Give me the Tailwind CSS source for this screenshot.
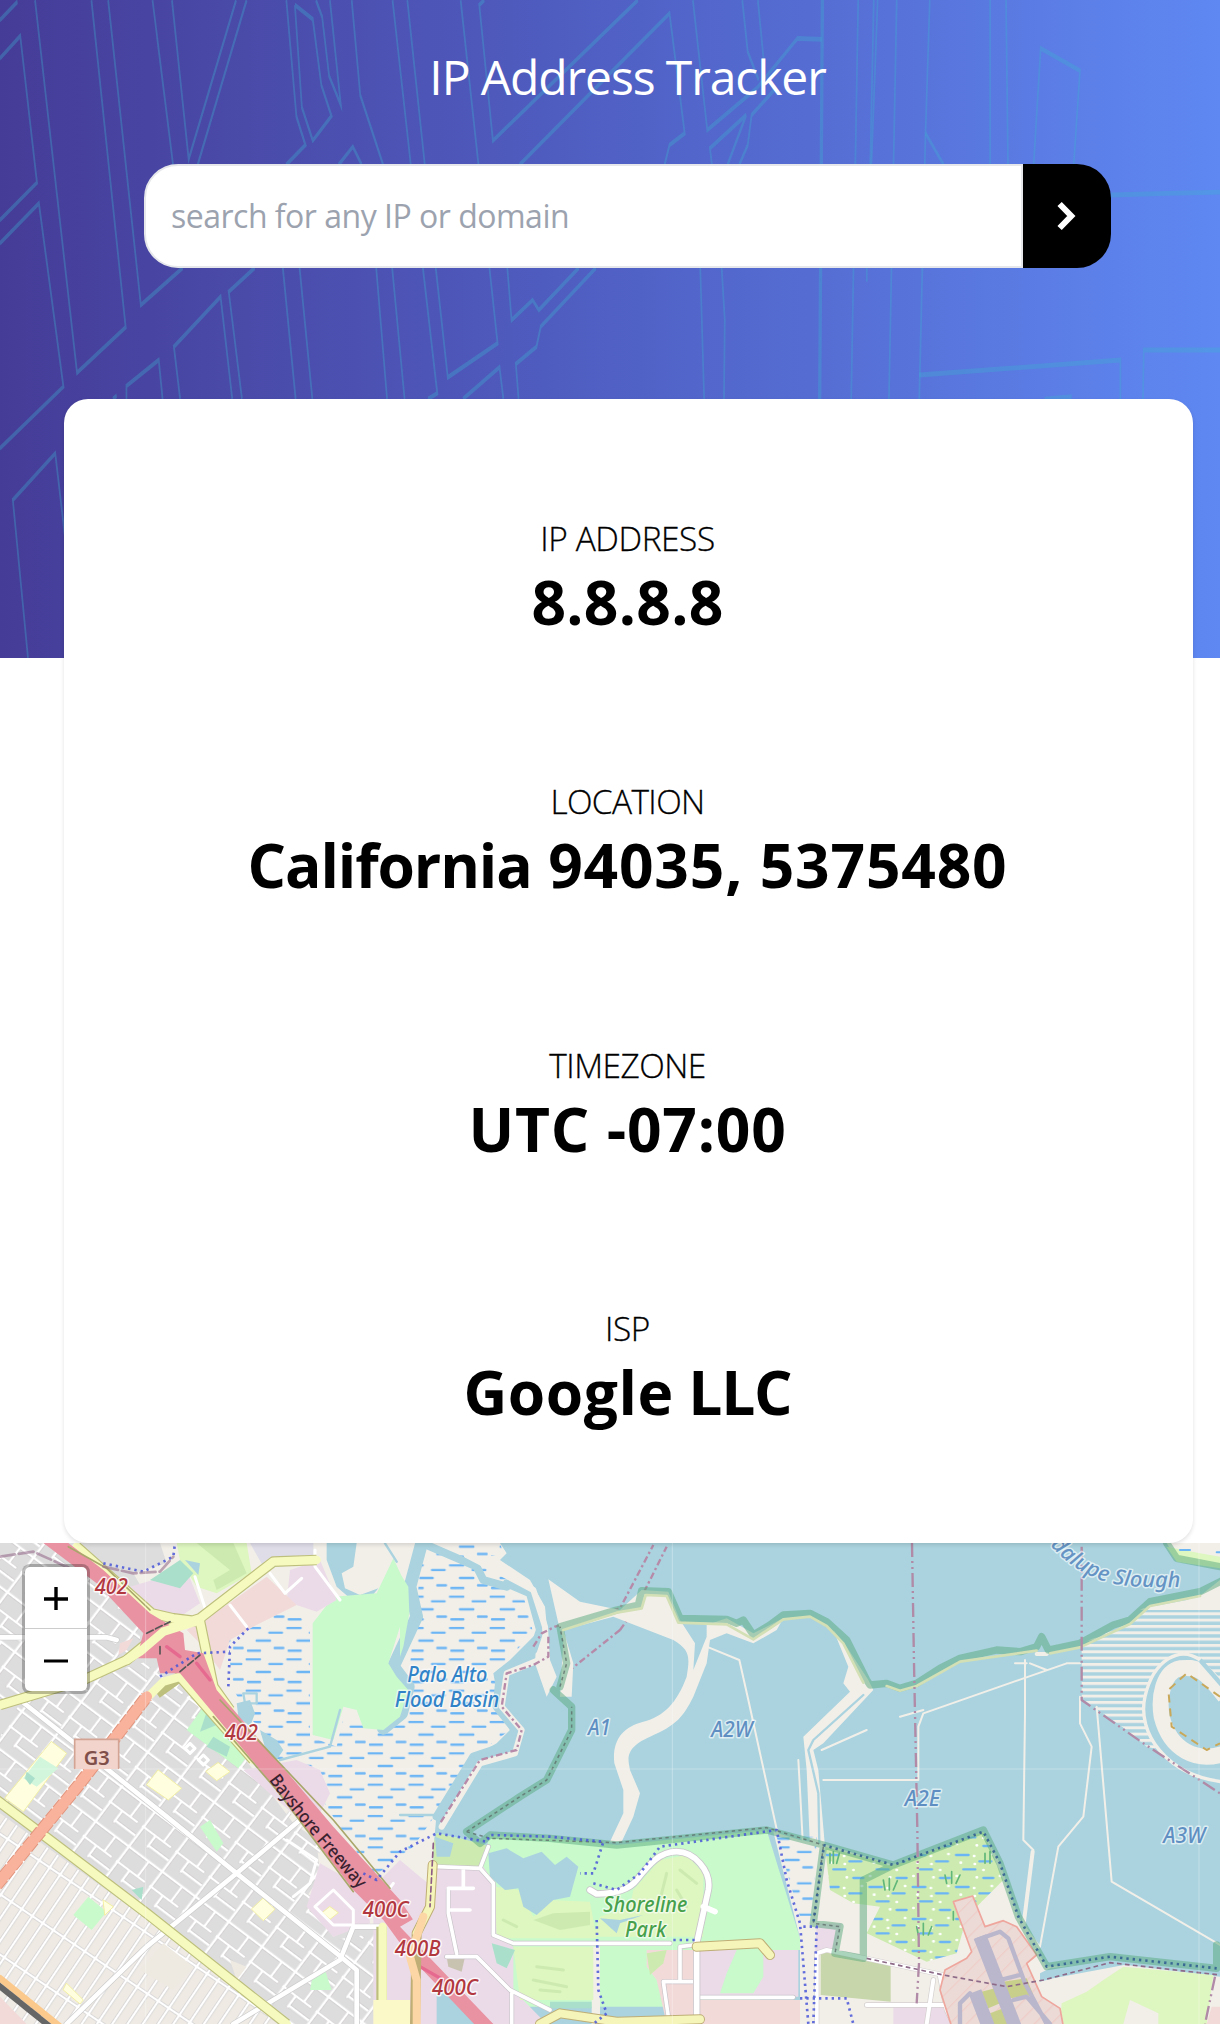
<!DOCTYPE html>
<html lang="en">
<head>
<meta charset="utf-8">
<title>IP Address Tracker</title>
<script src="https://cdn.jsdelivr.net/npm/@tailwindcss/browser@4"></script>
</head>
<body class="bg-white font-['Open_Sans','Noto_Sans',sans-serif] text-black">
<main class="relative flex h-[2024px] w-[1220px] flex-col overflow-hidden">
  <header class="relative flex h-[658px] shrink-0 flex-col items-center bg-linear-to-r from-[#453c97] from-0% via-[#5060c4] via-50% to-[#5f88f2] to-100%">
    <svg class="absolute inset-0 h-full w-full" viewBox="0 0 3136 1974" preserveAspectRatio="none" aria-hidden="true">
      <g id="streets" transform="scale(4 13)" fill="none" stroke="#3fb0d0" stroke-opacity=".34" stroke-width="1.1"></g>
    </svg>
    <h1 class="relative mt-[45px] ml-[35px] text-5xl leading-[64px] font-normal tracking-[-1.1px] whitespace-nowrap text-white">IP Address Tracker</h1>
    <form class="relative mt-[55px] ml-[35px] flex h-[104px] w-[967px]">
      <div class="flex h-full w-[879px] items-center rounded-l-[34px] border-2 border-[#e5e7eb] bg-white pl-[25px] text-[32px] leading-none tracking-[-0.5px] text-[#9ca3af]">search for any IP or domain</div>
      <button type="button" class="flex h-full w-[88px] items-center justify-center rounded-r-[34px] bg-black" aria-label="Search">
        <svg class="h-[32px] w-[24px]" viewBox="0 0 24 32" fill="none" stroke="#fff" stroke-width="6"><path d="M4.6 4 16.3 16 4.6 28"/></svg>
      </button>
    </form>
  </header>

  <section class="relative z-10 -mt-[259px] ml-[64px] flex h-[1144px] w-[1129px] shrink-0 flex-col items-center gap-[135.4px] rounded-[24px] bg-white pt-[115px] pr-[2px] shadow-[0_2px_4px_rgba(0,0,0,0.12)]">
    <div class="flex flex-col items-center whitespace-nowrap"><p class="text-[33.4px] leading-[48px] font-light tracking-[-0.4px] [-webkit-text-stroke:0.3px_#000]">IP ADDRESS</p><p class="text-[60.5px] leading-[80px] font-bold tracking-[0.3px]">8.8.8.8</p></div>
    <div class="flex flex-col items-center whitespace-nowrap"><p class="text-[33.4px] leading-[48px] font-light tracking-[-0.6px] [-webkit-text-stroke:0.3px_#000]">LOCATION</p><p class="text-[60.5px] leading-[80px] font-bold tracking-[0.8px]"><span class="tracking-[-1.1px]">California</span> 94035, 5375480</p></div>
    <div class="flex flex-col items-center whitespace-nowrap"><p class="text-[33.4px] leading-[48px] font-light tracking-[-0.5px] [-webkit-text-stroke:0.3px_#000]">TIMEZONE</p><p class="text-[60.5px] leading-[80px] font-bold tracking-[0.8px]">UTC -07:00</p></div>
    <div class="flex flex-col items-center whitespace-nowrap"><p class="text-[33.4px] leading-[48px] font-light tracking-[-0.4px] [-webkit-text-stroke:0.3px_#000]">ISP</p><p class="text-[60.5px] leading-[80px] font-bold tracking-[-1.2px]"><span class="tracking-[0.5px]">Google</span> LLC</p></div>
  </section>

  <section class="relative h-[481px] w-full shrink-0 overflow-hidden bg-[#aad3df]">
    <svg class="block h-full w-full" viewBox="0 39 3660 1443" fill="none" stroke-linejoin="round" stroke-linecap="round">
      <defs>
        <pattern id="marsh" width="122" height="94" patternUnits="userSpaceOnUse"><path d="M8 12h40M76 26h38M38 50h40M92 72h26M12 80h36" stroke="#6cb5f5" stroke-width="7"/></pattern>
        <pattern id="reeds" width="130" height="96" patternUnits="userSpaceOnUse"><rect width="130" height="96" fill="#cdebb0"/><path d="M8 15h38M78 34h36M30 58h36M90 84h30" stroke="#6cb5f5" stroke-width="7"/><path d="M62 18h1M22 38h1M64 42h1M90 60h1M10 78h1M70 82h1M115 12h1" stroke="#fff" stroke-width="8"/></pattern>
        <pattern id="blocks1" width="125" height="130" patternUnits="userSpaceOnUse" patternTransform="rotate(37)"><path d="M0 5h125M0 62h80M5 0v130M50 62v40M80 5v57h25M50 98h75" stroke="#d0cdcd" stroke-width="12"/><path d="M0 5h125M0 62h80M5 0v130M50 62v40M80 5v57h25M50 98h75" stroke="#fff" stroke-width="7.5"/></pattern>
        <pattern id="blocks2" width="38" height="150" patternUnits="userSpaceOnUse" patternTransform="rotate(34)"><rect width="38" height="150" fill="#efebe4"/><path d="M0 6h38M6 0v150" stroke="#d0cdcd" stroke-width="12"/><path d="M0 6h38M6 0v150" stroke="#fff" stroke-width="7.5"/></pattern>
        <pattern id="ponds" width="40" height="19" patternUnits="userSpaceOnUse"><path d="M-5 4h50" stroke="#f2efe9" stroke-width="9"/></pattern>
        <pattern id="apron" width="36" height="36" patternUnits="userSpaceOnUse" patternTransform="rotate(45)"><rect width="36" height="36" fill="#ebdad6"/><path d="M2-2v40" stroke="#f0cac5" stroke-width="3"/></pattern>
      </defs>

      <!-- land and flood basin -->
      <path fill="#f2efe9" d="M0 39H1500L1520 70 1500 90 1590 150 1635 230 1650 390 1670 440 1640 500 1605 400 1610 310 1530 390 1480 430 1500 540 1530 600 1490 640 1420 680 1310 850 1300 960V1482H0Z"/>
      <path fill="url(#marsh)" d="M860 240 930 280V620L1010 650 1040 520 1070 580 1180 600 1225 450 1270 39H1500L1510 70 1420 90 1560 160 1600 310 1480 430 1500 540 1530 600 1420 680 1310 850 1240 950 1120 1040 960 800 840 700 700 480 680 310Z"/>
      <path stroke="#aad3df" stroke-width="38" d="M1265 39 1230 170 1250 260 1180 410 1225 470 1205 550 1150 595"/>
      <path stroke="#aad3df" stroke-width="24" d="M1280 45 1430 110 1450 150 1520 170M1520 160 1590 190 1620 300 1600 360 1500 430 1490 530 1545 600 1510 650 1420 680 1310 860"/>
      <path stroke="#f2efe9" stroke-width="18" d="M1400 75 1515 135 1600 180 1635 290 1640 380 1520 430 1505 530 1565 600 1545 670 1440 700 1325 890"/>
      <path stroke="#b68aa8" stroke-width="7" stroke-dasharray="20 9 7 9" d="M1600 350 1625 310 1665 290 1860 235 1960 45M1860 300 1710 420M1860 300 1910 230 2000 50M1645 320 1645 380 1600 405 1520 430 1505 530 1565 600 1550 660 1440 690 1320 880" stroke-linecap="butt"/>
      <path fill="#aad3df" d="M980 39H1070L1060 110 1025 130 1035 175 1080 195 1135 175 1110 205 1050 205 1010 170 980 90Z"/>
      <path fill="#c8facc" d="M1180 85 1215 160 1200 290 1165 400 1190 440 1225 480 1200 560 1150 600 1090 595 1070 540 1030 530 1000 630 938 615V280L1000 200 1130 190ZM1200 130 1225 170 1228 250 1210 350 1200 380Z"/>
      <path stroke="#aad3df" stroke-width="7" d="M840 690 990 650 1020 540M1200 855H1300M1155 40 1190 95M730 490H770V520H735Z"/>
      <path fill="#aad3df" d="M710 520 750 510 765 550 750 590 715 560ZM780 600 830 630 850 660 830 690 800 670Z"/>

      <!-- town districts -->
      <path fill="#dedddd" d="M0 39H480L500 100 400 130 470 250 480 400 560 430 640 560 760 720 880 880 950 930 960 1040 920 1100 1000 1220 1060 1190H1130V1482H0Z"/>
      <path fill="url(#blocks1)" d="M0 39H250L420 260V380L250 430 0 520ZM60 520 420 400 480 390 540 450 640 560 760 720 960 950 950 1100 1000 1230 1130 1210V1482H850L440 1130 130 910 0 800V620Z"/>
      <path fill="url(#blocks2)" d="M0 850 430 1160 860 1482H0Z"/>
      <path fill="#eeeae2" d="M490 1240 580 1310 520 1380 420 1320ZM690 1290 740 1310 710 1350Z"/>
      <path fill="#ebdbe8" d="M390 170 560 120 600 220 540 260 450 240ZM730 720 890 690 960 720 990 790 960 850 900 870ZM960 1000 1100 1080 1110 1180 1000 1220 920 1130ZM1120 1070 1200 990 1260 1040 1310 1080V1482H1120ZM870 120 960 90 1010 210 950 245 860 215Z"/>
      <path fill="#f2dad9" d="M560 300 680 225 800 140 890 225 760 290 690 330 660 420 600 340Z"/>
      <path fill="#dfdde8" d="M750 39H940V100L820 85 790 110Z"/>
      <path fill="#def6c0" d="M530 39H740L755 130 650 190 590 170 540 90Z"/>
      <path fill="#cdebb0" d="M590 39H700L740 130 650 180 640 150 690 120Z"/>
      <path fill="#aae0cb" d="M450 150 540 90 580 130 540 175Z"/>
      <path fill="#aad3df" d="M555 90 600 100 595 135Z"/>
      <path fill="#c8facc" d="M610 530 740 680 715 715 560 600ZM600 890 630 870 670 940 650 965ZM265 1100 320 1145 275 1200 220 1155ZM940 1330 975 1320 995 1380 930 1380Z"/>
      <path fill="#aae0cb" d="M620 545 650 585 600 605ZM640 620 690 650 680 680 620 650ZM395 1080 430 1070 425 1110Z"/>
      <path fill="#ffffe0" stroke="#f3f0a4" stroke-width="3" d="M155 635 200 670 70 845 15 805ZM475 720 545 775 505 810 440 765ZM655 698 690 725 650 752 618 725ZM790 1105 825 1138 790 1172 755 1138ZM310 1110 340 1130 315 1155ZM990 1130 1015 1148 990 1168 968 1148ZM200 1360 250 1410 240 1422 190 1380Z"/>
      <path fill="#d2f6dc" d="M120 680 175 715 110 770 70 745Z"/><path fill="#aae0cb" d="M80 725 105 745 90 765 75 745Z"/>

      <!-- roads -->
      <g stroke="#ccc" stroke-width="18"><path d="M60 510 300 700 500 860 710 1030 1010 1270 1070 1320V1482M900 870 710 1030 440 1250 200 1482M700 1482 1020 1290 1060 1190H1150M0 322H320L350 330"/></g>
      <g stroke="#fff" stroke-width="14"><path d="M60 510 300 700 500 860 710 1030 1010 1270 1070 1320V1482M900 870 710 1030 440 1250 200 1482M700 1482 1020 1290 1060 1190H1150M0 322H320L350 330"/></g>
      <path stroke="#fff" stroke-width="9" d="M810 130 855 190 905 145M585 140 620 250M690 225 740 290M945 60V110L1020 210M1000 1080 945 1130 1000 1185H1060V1140ZM570 640 555 655 570 670 585 655ZM610 675 595 690 610 705 625 690ZM860 930 950 990 930 1060 880 1100M1180 1060 1150 1100"/>
      <path stroke="#bdc07c" stroke-width="32" d="M-10 810 130 915 440 1150 860 1482M0 525 250 450 380 390 490 300 600 265 820 95 950 90M230 50 455 250 520 265 600 275 640 470 690 540M470 490 540 440 760 690M1145 1190V1482" stroke-linecap="butt"/>
      <path stroke="#f7fabf" stroke-width="25" d="M-10 810 130 915 440 1150 860 1482M0 525 250 450 380 390 490 300 600 265 820 95 950 90M230 50 455 250 520 265 600 275 640 470 690 540M450 495 490 455 540 440 760 690M1148 1190V1482"/>
      <path stroke="#e1957e" stroke-width="38" d="M-10 1065 240 760 440 500" stroke-dasharray="30 6" stroke-linecap="butt"/>
      <path stroke="#f9b29c" stroke-width="32" d="M-10 1065 240 760 440 500"/>
      <path fill="#e892a2" d="M130 39H205L310 120 450 250 550 310 555 360 610 370 650 480 830 690 1000 890 1200 1110 1260 1200 1530 1490H1430L1230 1280 1150 1170 1060 1080 830 780 640 550 540 430 480 430 470 385 410 385 430 310 290 160Z"/>
      <path stroke="#f7fabf" stroke-width="26" d="M380 390 420 365 490 305 600 270"/>
      <path stroke="#a9a76b" stroke-width="5" d="M205 50 320 115 450 240M660 510 1000 870 1170 1075M640 560 830 780 1060 1085"/>
      <path stroke="#e66a90" stroke-width="10" d="M500 350 540 380M590 400 630 450M1260 1310 1330 1350"/>
      <path stroke="#555" stroke-width="5" d="M440 310 510 275M480 350V380M540 425 600 375" stroke-dasharray="22 8"/>
      <path stroke="#fcc98c" stroke-width="20" d="M0 1345 180 1490"/><path stroke="#666" stroke-width="18" d="M-5 1365 150 1490" stroke-dasharray="35 5"/>
      <path fill="#f2dad9" d="M0 1400 80 1482H0ZM360 340 400 325 380 360 355 375Z"/>

      <!-- area behind the park -->
      <path fill="#c8facc" d="M1310 910 1380 925 1460 950 1470 915 1650 925 1850 945 2300 900 2400 1225V1260H2280V1430H1470V1040H1300Z"/>
      <path fill="#cdebb0" d="M1310 910 1440 940 1470 950 1440 1010H1300V940Z"/>
      <path fill="#ebdbe8" d="M1300 1010H1450L1490 1070V1220L1540 1250V1380L1640 1482H1480L1200 1190 1270 1150ZM2100 1260H2395V1400H2100Z"/>
      <path fill="#f2efe9" d="M1775 1250H1800V1482H1775Z"/>
      <path fill="#def6c0" d="M1485 1070 1560 1080 1600 1160 1650 1110 1770 1115 1790 1225H1490ZM1540 1250H1780V1410H1560ZM1900 1080 1980 990 2060 975 2110 1030 2110 1220H1780L1800 1160 1890 1130Z"/>
      <path fill="#cdebb0" d="M1600 1170 1660 1150 1770 1145V1185L1680 1200Z"/>
      <path fill="#f2dad9" d="M1940 1260H2090V1482H2000L1970 1350 1940 1310ZM2100 1410H2400V1482H2100Z"/>
      <path fill="#cdebb0" d="M1940 1270 2000 1260 1990 1300 1950 1335Z"/>
      <path fill="#c8facc" d="M2210 1260H2290V1340L2260 1390H2160L2180 1330Z"/>
      <path fill="#aad3df" d="M1465 970 1520 955 1570 985 1625 965 1665 1005 1700 980 1735 1010 1710 1100 1660 1110 1610 1155 1570 1130 1555 1075 1515 1080 1470 1040ZM1800 1165 1860 1170 1930 1155 1860 1180 1850 1210ZM1305 920 1360 940 1350 980 1310 980Z"/>
      <path fill="#aae0cb" d="M1475 1240 1545 1260 1520 1315 1490 1300ZM1650 1415H1775V1435H1650Z"/><path fill="#c8c3b0" d="M1340 1280H1395L1385 1325 1345 1310Z"/><path fill="#fbf9c8" d="M1120 1410H1230V1482H1120Z"/>
      <path stroke="#cdebb0" stroke-width="9" d="M1510 1170 1550 1190M1610 1310 1690 1320M1600 1350 1700 1370M1620 1380 1680 1385M2000 1030 1980 1110M2040 1020 2090 1060M2030 1080 2060 1130"/>
      <g stroke="#c9c4c9" stroke-width="15"><path d="M1310 1010 1440 1015 1480 1060V1215L1540 1240H2010M1465 950 1440 1015M1340 1280H1430L1530 1380 1650 1440M1345 1080V1150L1370 1270M1535 1390V1482M2090 1355H1990L2005 1460M2040 1350V1250L2080 1245M2100 1402H2380"/></g>
      <g stroke="#fff" stroke-width="11"><path d="M1310 1010 1440 1015 1480 1060V1215L1540 1240H2010M1465 950 1440 1015M1390 1015V1075H1345V1150L1370 1270M1345 1075H1420M1345 1140H1410M1340 1280H1430L1530 1380 1650 1440M1535 1390V1482M2090 1355H1990L2005 1460M2040 1350V1250L2080 1245M2100 1402H2380"/></g>
      <path stroke="#c9c4c9" stroke-width="22" d="M1770 1080 1790 1092Q1880 1090 1910 1050C1950 1000 1980 965 2030 965S2135 1020 2125 1080L2090 1240V1482"/>
      <path stroke="#fff" stroke-width="17" d="M1770 1080 1790 1092Q1880 1090 1910 1050C1950 1000 1980 965 2030 965S2135 1020 2125 1080L2090 1240V1482M2110 1130 2145 1145"/>
      <path stroke="#bfae75" stroke-width="30" d="M1298 1005 1290 1130 1250 1210 1245 1482M2090 1250 2280 1240 2310 1275M1620 1482 1680 1450 1850 1475 2100 1468"/><path stroke="#f5f5ba" stroke-width="24" d="M1298 1005 1290 1130 1250 1210M2090 1250 2280 1240 2310 1275M1620 1482 1680 1450 1850 1475 2100 1468"/><path stroke="#fcd6a4" stroke-width="24" d="M1270 1160 1230 1280 1250 1350V1482"/>
      <path stroke="#8d5c86" stroke-width="5" d="M1300 940 1290 1130" stroke-dasharray="16 10"/>

      <!-- salt ponds -->
      <g fill="#f2efe9">
        <path d="M1645 148 1740 215 1860 240 1925 180 2005 185 2040 270 2085 340 2080 420 2120 320V285L2180 265 2260 310 2350 265 2330 300 2260 340 2180 310 2130 330 2120 400 2080 500C2050 560 2030 585 1950 620S1885 690 1890 720L1920 790 1900 860 1865 935H1830L1870 850 1870 780 1843 700C1835 630 1870 590 1930 575S2030 520 2060 440C2070 380 2070 360 2020 330L1840 260 1690 300 1720 400 1715 500 1680 500 1690 330 1675 280Z"/>
        <path d="M2500 300 2540 350 2605 450 2620 480 2470 640 2440 660 2455 720 2475 950H2430L2420 720 2410 620 2550 485 2530 460 2545 410Z"/>
      </g>
      <path stroke="#aad3df" stroke-width="7" d="M2590 495 2440 630 2425 660 2455 790 2458 940"/>
      <g stroke="#f2efe9" stroke-width="6"><path d="M2120 350 2218 390 2245 510 2335 920M2395 690 2400 780 2408 930M2465 660 2600 600M2470 750H2755V590L2770 550 3200 400M3075 390 3075 550 3070 930 3100 960M3240 500V580L3275 650 3250 860 3175 950 3120 1250M3290 530 3335 1055 3660 1245M3090 400 3140 420M3045 400H3080M2700 560 2770 540M3200 400H3240"/></g>
      <path stroke="#f2efe9" stroke-width="12" d="M3098 965 3070 1190 3115 1250M3110 372H3140"/>

      <!-- evaporation ponds at the slough -->
      <path fill="#f2efe9" d="M3500 39H3660V110L3530 90ZM3430 235 3560 210 3610 190 3660 150V240H3420Z"/>
      <path fill="#def6c0" d="M3500 50 3600 70 3660 80V115L3530 95Z"/><path stroke="#6cb5f5" stroke-width="6" d="M3540 60h30M3650 67h10"/>
      <path fill="url(#ponds)" d="M3245 340 3390 280 3450 220H3660V700L3440 650 3380 600 3245 505Z"/>
      <path fill="#aad3df" stroke="#f2efe9" stroke-width="10" d="M3665 480 3600 390C3540 345 3460 390 3435 500S3500 735 3665 755"/>
      <path stroke="#f2efe9" stroke-width="48" stroke-linecap="butt" d="M3675 500C3610 415 3590 410 3540 415 3490 425 3475 500 3485 560 3510 660 3590 700 3675 670"/>
      <path stroke="#aad3df" stroke-width="13" stroke-linecap="butt" d="M3600 390 3670 470"/>
      <path stroke="#c9a85a" stroke-width="6" stroke-dasharray="24 18" stroke-linecap="butt" d="M3660 500 3560 430 3505 480 3515 590 3620 660 3660 640"/>

      <!-- marsh, airfield and bayfront -->
      <path fill="#f2efe9" d="M2320 905 2400 930 2480 945 2680 1005 2950 905 3000 1000 3055 1160 3140 1310 3340 1300 3660 1340V1482H2400V1225Z"/>
      <path fill="url(#marsh)" d="M2330 920H2450L2440 1160H2400Z"/>
      <path fill="url(#reeds)" d="M2475 950 2680 1005 2950 905 3010 1050 2930 1130 2900 1160 2870 1270 2780 1295 2600 1210 2640 1130 2560 1120 2490 1080Z"/>
      <path stroke="#61b77a" stroke-width="5" d="M2490 1000V970M2500 1000V965M2510 1000 2518 970M2655 1080 2650 1050M2668 1080V1045M2680 1080 2692 1052M2840 1060 2835 1035M2855 1060V1025M2868 1060 2880 1035M2755 1215 2750 1190M2770 1215V1180M2785 1215 2795 1190M2955 1000V970M2970 1000V965M2860 1170V1145"/>
      <path fill="#ebdbe8" d="M2450 1180H2525L2505 1270H2445ZM2680 1430H2840L2860 1482H2680Z"/><path fill="#c8d7ab" d="M2462 1265 2672 1300V1415L2462 1395Z"/>
      <path fill="#def6c0" d="M3185 1420 3260 1385 3310 1350 3370 1310 3640 1335 3620 1482H3180Z"/><path fill="#f2efe9" d="M3390 1410 3475 1450V1482H3370Z"/><path fill="#f2dad9" d="M3635 1430H3660V1482H3620Z"/>
      <path stroke="#d5d0d0" stroke-width="16" d="M2450 1482V1270L2480 1260 2830 1335M2820 1340 2840 1440 2860 1482M2600 1425H2830M2800 1350 2780 1482"/>
      <path stroke="#fff" stroke-width="12" d="M2450 1482V1270L2480 1260 2830 1335M2820 1340 2840 1440 2860 1482M2600 1425H2830M2800 1350 2780 1482"/>
      <path fill="url(#apron)" stroke="#eea69d" stroke-width="5" d="M2860 1115 2918 1098 2955 1190 3010 1172 3050 1190 3110 1275 3080 1300 3125 1400 3180 1435 3190 1490H2855L2820 1380 2835 1320 2900 1285 2915 1265Z"/>
      <path fill="#c8cf8b" d="M3010 1355 3080 1345 3100 1395 3030 1405ZM2945 1385 2985 1375 3000 1420 2965 1435ZM2970 1450 3010 1435 3030 1482H2980Z"/>
      <path stroke="#bab6cb" stroke-width="40" stroke-linecap="butt" d="M2940 1220 3045 1490M2925 1385 2965 1490"/>
      <path stroke="#bab6cb" stroke-width="13" d="M2930 1230 3000 1205 3025 1225 3075 1360 3140 1482M2880 1482 2880 1420 2910 1390M3000 1350 3060 1335M3040 1410 3080 1400 3150 1482"/>
      <path fill="#aad3df" d="M3120 1330 3150 1315 3340 1290 3400 1300 3160 1345 3120 1355Z"/>

      <!-- reserve boundary -->
      <path stroke="#58aa7c" stroke-opacity=".5" stroke-width="22" d="M1400 905 1560 800 1640 750 1715 600V530L1660 480M1680 470 1700 400 1680 290 1850 240 1915 225 1925 182 2005 185 2040 265 2180 268 2210 280 2230 270 2260 315 2310 285 2350 255 2430 250 2480 275 2540 330 2600 450 2610 465 2660 460 2700 475 2750 460 2820 415 2880 385 2990 360 3060 365 3110 350 3125 320 3145 360 3240 340 3340 285 3390 270 3450 215 3600 185 3660 155M3500 39 3530 85 3660 110M1400 905 1440 940 1470 915 1650 925 1850 945 2300 900 2470 945 2680 1005 2950 900 3000 1000 3055 1160 3140 1310 3330 1280 3650 1315V1245M2470 950 2440 1180 2520 1190 2505 1270 2590 1285V1050L2670 1010"/>
      <path stroke="#d3dfb4" stroke-width="8" d="M1690 300 1850 248 1925 235 1937 195 2000 198 2035 278 2180 283 2260 328 2350 268 2430 260 2480 288 2530 340 2590 458M2660 468 2700 482 2750 468 2880 395 3110 362M3150 370 3240 352 3390 282 3450 228 3600 198"/>
      <path stroke="#5d6a68" stroke-width="4.5" stroke-opacity=".75" stroke-dasharray="10 10" stroke-linecap="butt" d="M1400 905 1560 800 1640 750 1715 600V530M1680 470 1700 400 1680 290M1400 905 1470 925 1850 938 2300 893 2470 945M2470 950 2440 1180 2520 1190 2505 1270"/>
      <path stroke="#8d6a88" stroke-width="5" stroke-dasharray="14 10" stroke-linecap="butt" d="M2600 1285 2830 1335 3020 1370 3130 1350 3330 1298 3660 1335"/>
      <g stroke="#4956d8" stroke-opacity=".85" stroke-width="8" stroke-dasharray="7 12" stroke-linecap="butt"><path d="M310 100 430 125 520 80 525 39M745 295 690 350 685 470M480 440 590 370 690 365M1090 1030 1130 1050 1200 965 1310 910 1460 935 1470 915 1650 920 1810 935 1780 1030 1740 1030M1780 1060 1850 1080 1920 1030 1980 950 2330 900 2360 1050 2400 1180 2425 1482M1790 1170 1795 1380 1820 1450 1780 1482M2020 1230 2090 1230"/><path stroke="#2f5a90" d="M2470 945 2680 1005 2950 905 3000 1000 3055 1160 3140 1310 3330 1280 3650 1315M2470 960 2440 1180"/><path d="M2410 1190H2450L2440 1482M2400 1405H2540L2560 1482"/></g>
      <path stroke="#b08aa6" stroke-width="7" stroke-dasharray="42 12 6 12 6 12" stroke-linecap="butt" d="M2736 39 2742 400 2752 900 2757 1300 2750 1420M3245 50V510L3430 640 3660 790M3645 1340 3615 1482"/>
      <path stroke="#96708e" stroke-width="8" stroke-dasharray="45 12" d="M0 80 100 65 210 115M310 110 400 130 480 125 520 80" stroke-opacity=".6"/>
      <path stroke="#fff" stroke-opacity=".3" stroke-width="3" d="M0 717H3660M437 39V1482M2017 39V1482M3597 39V1482"/>

      <!-- labels -->
      <path fill="#f2d4cd" d="M224 627H356V717H224Z"/><path stroke="#d3a494" stroke-width="5" d="M224 715V628H356V715"/>
      <g font-family="Noto Sans, Open Sans, sans-serif" font-style="italic" font-size="64" font-weight="500" paint-order="stroke" stroke="#fff" stroke-opacity=".6" stroke-width="9">
        <text x="251" y="706" font-style="normal" font-size="58" font-weight="600" fill="#804f4a" textLength="78" lengthAdjust="spacingAndGlyphs" stroke="none">G3</text>
        <g fill="#b1383f" stroke-opacity=".85"><text x="284" y="191" textLength="100" lengthAdjust="spacingAndGlyphs">402</text><text x="674" y="630" textLength="100" lengthAdjust="spacingAndGlyphs">402</text><text x="1088" y="1161" textLength="138" lengthAdjust="spacingAndGlyphs">400C</text><text x="1184" y="1278" textLength="138" lengthAdjust="spacingAndGlyphs">400B</text><text x="1296" y="1396" textLength="138" lengthAdjust="spacingAndGlyphs">400C</text></g>
        <g fill="#3183c8"><text x="1222" y="457" textLength="240" lengthAdjust="spacingAndGlyphs">Palo Alto</text><text x="1184" y="530" textLength="314" lengthAdjust="spacingAndGlyphs">Flood Basin</text></g>
        <g fill="#5f8fc2"><text x="1764" y="616" textLength="68" lengthAdjust="spacingAndGlyphs">A1</text><text x="2134" y="620" textLength="124" lengthAdjust="spacingAndGlyphs">A2W</text><text x="2714" y="829" textLength="106" lengthAdjust="spacingAndGlyphs">A2E</text><text x="3490" y="938" textLength="126" lengthAdjust="spacingAndGlyphs">A3W</text></g>
        <path id="slough" d="M3105 -10C3170 75 3250 166 3420 170S3520 168 3580 158" stroke="none"/>
        <text fill="#6594c4" font-size="64"><textPath href="#slough" startOffset="72" textLength="428" lengthAdjust="spacingAndGlyphs">dalupe Slough</textPath></text>
        <g fill="#46a04c"><text x="1810" y="1147" textLength="252" lengthAdjust="spacingAndGlyphs">Shoreline</text><text x="1875" y="1220" textLength="124" lengthAdjust="spacingAndGlyphs">Park</text></g>
      </g>
      <path id="fwy" d="M806 750C890 865 965 950 1100 1105"/>
      <text font-family="Noto Sans, sans-serif" font-size="54" font-weight="500" fill="#3b2230"><textPath href="#fwy" textLength="425" lengthAdjust="spacingAndGlyphs">Bayshore Freeway</textPath></text>
    </svg>
    <div class="absolute top-[21px] left-[22px] flex w-[68px] flex-col overflow-hidden rounded-[8px] border-[3px] border-black/25 bg-white bg-clip-padding">
      <button type="button" class="flex h-[62px] items-center justify-center border-b border-[#ccc]" aria-label="Zoom in"><svg class="h-6 w-6" viewBox="0 0 24 24" stroke="#000" stroke-width="3.4"><path d="M0 13h24M12 1v23"/></svg></button>
      <button type="button" class="flex h-[62px] items-center justify-center" aria-label="Zoom out"><svg class="h-6 w-6" viewBox="0 0 24 24" stroke="#000" stroke-width="3.2"><path d="M0 13h24"/></svg></button>
    </div>
  </section>
</main>
<script>
// Street outlines of the hero backdrop; the group is stretched, so strokes grow thicker towards the horizontal.
const lines = [
 "0,60 45,5","0,175 52,108 95,548 0,660","90,0 198,1118 323,982 235,0","278,0 362,915 470,803","392,0 445,495","442,0 485,478 607,0","634,0 508,495",
 "0,730 100,610 163,1160 0,1345","736,0 762,350 785,435 735,495","758,15 804,58 826,255 852,348 804,422 776,322 758,15","812,0 828,50 846,228 876,315 848,0","904,0 926,285 985,495",
 "870,495 907,440 930,495","1009,0 1056,495","1047,0 1092,495","1184,0 1230,495","1245,0 1232,15 1267,422 1640,0","1335,495 1721,40 1760,400 1721,435 1708,495",
 "727,803 760,1197","770,803 803,1197","655,803 588,875 622,1197","597,1197 567,890 447,1040 463,1197","325,1197 325,1158 408,1080 418,1197","290,1197 300,1187",
 "967,803 995,1197","1008,803 1040,1197","1087,803 1124,1180 1100,1197","1120,803 1151,1132 1279,1030 1258,803","1304,803 1315,960 1369,900 1385,930 1488,803","1532,803 1390,980 1379,1040 1326,1092 1333,1197","1190,1197 1284,1102 1294,1197",
 "1781,0 1818,390 1945,265 2050,115 2112,118","1908,0 1922,155 1950,240","1948,0 1963,180","1870,495 1918,345 1825,445 1830,495","1900,495 1922,435 1932,345 1990,270",
 "2112,0 2105,1197","2116,0 2109,1197","2206,0 2188,1197","2246,0 2237,495","2256,0 2240,495","2305,0 2285,1197","2390,0 2379,400 2363,1197","2379,400 2426,495","2228,803 2228,845",
 "2545,0 2545,495","2586,0 2591,495","2657,495 2675,145 2776,212 2760,495","2856,585 3000,580 3136,576","1800,803 1810,1197","1855,803 1863,960 1861,1197","2363,1125 2880,1080 2880,1197","2938,1197 2940,1050 3136,1050","2685,1197 2755,1190",
 "72,1974 33,1500 142,1360 170,1640"
];
document.getElementById("streets").innerHTML = lines.map(l =>
  '<polyline points="' + l.split(" ").map(p => { const [x, y] = p.split(","); return (x / 4).toFixed(2) + "," + (y / 13).toFixed(2); }).join(" ") + '"/>').join("");
</script>
</body>
</html>
